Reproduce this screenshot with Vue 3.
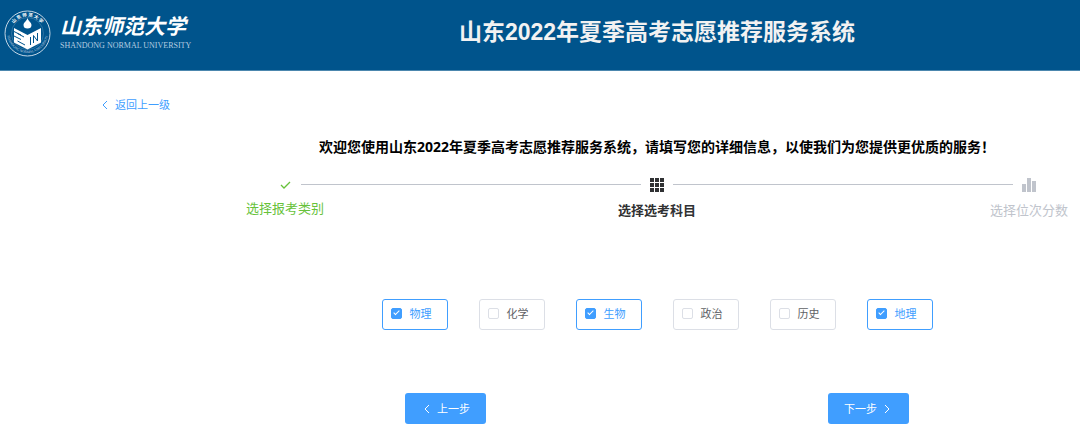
<template>
    <div class="page">
        <header class="header">
            <div class="brand">
                <svg class="brand__emblem" viewBox="0 0 94 94" aria-hidden="true">
                    <defs>
                        <path id="arc-top" d="M13 47 A34 34 0 0 1 81 47" />
                        <path id="arc-bottom" d="M6 45 A41 41 0 0 0 88 45" />
                    </defs>
                    <circle cx="47" cy="47" r="45" fill="none" stroke="#c3d6e5" stroke-width="2" />
                    <circle cx="47" cy="47" r="32" fill="none" stroke="#5b91b6" stroke-width="1" />
                    <text class="brand__ring brand__ring--cn" text-anchor="middle">
                        <textPath href="#arc-top" startOffset="50%">山 东 师 范 大 学</textPath>
                    </text>
                    <text class="brand__ring" text-anchor="middle">
                        <textPath href="#arc-bottom" startOffset="50%">SHANDONG NORMAL UNIVERSITY</textPath>
                    </text>
                    <path d="M47 16 C49 23 55 25 55 30 A8 7 0 0 1 39 30 C39 25 45 23 47 16Z" fill="#fff" />
                    <path d="M20 36 L47 50 L74 36 V65 L47 79 L20 65Z" fill="#fff" />
                    <path d="M20 43 L34 50 M27 47 L40 54 M20 52 L34 59 M27 62 L42 70" fill="none" stroke="#00548c"
                        stroke-width="2" />
                    <path d="M53 54 V70 M59 51 V66 M59 51 L67 62 M67 46 V62" fill="none" stroke="#00548c"
                        stroke-width="2" />
                </svg>
                <div class="brand__text">
                    <span class="brand__cn">山东师范大学</span>
                    <span class="brand__en">SHANDONG NORMAL UNIVERSITY</span>
                </div>
            </div>
            <h1 class="header__title">山东2022年夏季高考志愿推荐服务系统</h1>
        </header>

        <div class="body">
            <aside class="side">
                <a href="#" class="back" @click.prevent="prev">
                    <svg class="chevron" viewBox="0 0 12 12" aria-hidden="true">
                        <path d="M8 2 L4 6 L8 10" />
                    </svg>
                    <span>返回上一级</span>
                </a>
            </aside>

            <main class="main">
                <h2 class="welcome">欢迎您使用山东2022年夏季高考志愿推荐服务系统，请填写您的详细信息，以使我们为您提供更优质的服务！</h2>

                <div class="steps">
                    <template v-for="(step, index) in steps" :key="step.title">
                        <span v-if="index > 0" class="steps__line"></span>
                        <div class="step" :class="`step--${step.status}`">
                            <span class="step__icon">
                                <svg v-if="step.icon === 'check'" width="12" height="12" viewBox="0 0 12 12">
                                    <path d="M2 6 L5 9 L11 3" fill="none" stroke="currentColor" stroke-width="1.3" />
                                </svg>
                                <svg v-else-if="step.icon === 'grid'" width="16" height="16" viewBox="0 0 16 16">
                                    <path fill="currentColor"
                                        d="M1 1h4v4H1z M6 1h4v4H6z M11 1h4v4h-4z M1 6h4v4H1z M6 6h4v4H6z M11 6h4v4h-4z M1 11h4v4H1z M6 11h4v4H6z M11 11h4v4h-4z" />
                                </svg>
                                <svg v-else width="16" height="16" viewBox="0 0 16 16">
                                    <path fill="currentColor" d="M1 7h4v8H1z M6 1h4v14H6z M11 4h4v11h-4z" />
                                </svg>
                            </span>
                            <span class="step__title">{{ step.title }}</span>
                        </div>
                    </template>
                </div>

                <div class="subjects">
                    <label v-for="subject in subjects" :key="subject" class="subject"
                        :class="{ 'subject--checked': selected.includes(subject) }">
                        <input v-model="selected" type="checkbox" class="subject__box" :value="subject">
                        <span>{{ subject }}</span>
                    </label>
                </div>

                <div class="actions">
                    <button type="button" class="btn" @click="prev">
                        <svg class="chevron" viewBox="0 0 12 12" aria-hidden="true">
                            <path d="M8 2 L4 6 L8 10" />
                        </svg>
                        <span>上一步</span>
                    </button>
                    <button type="button" class="btn" @click="next">
                        <span>下一步</span>
                        <svg class="chevron" viewBox="0 0 12 12" aria-hidden="true">
                            <path d="M4 2 L8 6 L4 10" />
                        </svg>
                    </button>
                </div>
            </main>
        </div>
    </div>
</template>

<script setup>
import { ref } from 'vue'

const emit = defineEmits(['prev', 'next'])

const steps = [
    { title: '选择报考类别', icon: 'check', status: 'success' },
    { title: '选择选考科目', icon: 'grid', status: 'process' },
    { title: '选择位次分数', icon: 'chart', status: 'wait' }
]

const subjects = ['物理', '化学', '生物', '政治', '历史', '地理']
const selected = ref(['物理', '生物', '地理'])

const prev = () => emit('prev')
const next = () => emit('next', selected.value)
</script>

<style>
body {
    margin: 0;
    background: #fff;
}
</style>

<style scoped>
.page {
    font-family: "Noto Sans", "Noto Sans CJK SC", sans-serif;
    font-size: 11px;
    line-height: 16px;
    color: #606266;
}

.header,
.body {
    display: grid;
    grid-template-columns: 234px 1fr;
}

.header {
    height: 70px;
    background: #00548c;
    border-bottom: 1px solid #4c87ae;
}

.header__title {
    margin: 0;
    padding-top: 16px;
    font-family: "Liberation Sans", "Noto Sans CJK SC", sans-serif;
    font-size: 23px;
    line-height: 32px;
    text-align: center;
    color: #f2f2f2;
}

.brand {
    display: flex;
    align-items: flex-start;
    gap: 9px;
    padding: 10px 0 0 4px;
}

.brand__emblem {
    flex: none;
    width: 47px;
    height: 47px;
}

.brand__ring {
    font-family: "Liberation Serif", serif;
    font-size: 7px;
    fill: #c3d6e5;
}

.brand__ring--cn {
    font-family: "Noto Sans CJK SC", sans-serif;
    font-size: 9px;
    font-weight: bold;
    fill: #fff;
}

.brand__text {
    display: flex;
    flex-direction: column;
    padding-top: 3px;
    white-space: nowrap;
}

.brand__cn {
    font-family: "Noto Sans CJK SC", sans-serif;
    font-size: 21px;
    font-style: italic;
    font-weight: bold;
    line-height: 24px;
    color: #fff;
}

.brand__en {
    padding-top: 4px;
    font-family: "Liberation Serif", serif;
    font-size: 8px;
    line-height: 10px;
    color: #b5cde0;
}

.side {
    padding: 26px 0 0 99px;
}

.back {
    display: inline-flex;
    align-items: center;
    gap: 4px;
    color: #409eff;
    text-decoration: none;
}

.chevron {
    width: 12px;
    height: 12px;
    fill: none;
    stroke: currentColor;
    stroke-width: 1;
}

.welcome {
    margin: 0;
    padding-top: 66px;
    font-size: 14px;
    line-height: 20px;
    text-align: center;
    white-space: nowrap;
    color: #000;
}

.steps {
    display: grid;
    grid-template-columns: 78px 1fr 78px 1fr 78px;
    padding: 16px 12px 0;
}

.steps__line {
    height: 1px;
    margin: 11px -23px 0;
    background: #c0c4cc;
}

.step {
    display: flex;
    flex-direction: column;
    align-items: center;
    font-size: 13px;
    line-height: 20px;
    white-space: nowrap;
}

.step__icon {
    display: flex;
    align-items: center;
    height: 24px;
}

.step__title {
    padding-top: 3px;
}

.step--success {
    color: #67c23a;
}

.step--success .step__title {
    padding-top: 1px;
}

.step--process {
    font-weight: bold;
    color: #303133;
}

.step--wait {
    color: #c0c4cc;
}

.subjects {
    display: flex;
    justify-content: center;
    gap: 31px;
    padding-top: 79px;
}

.subject {
    display: flex;
    align-items: center;
    gap: 8px;
    box-sizing: border-box;
    width: 66px;
    height: 31px;
    padding: 0 0 2px 8px;
    border: 1px solid #dcdfe6;
    border-radius: 3px;
    cursor: pointer;
}

.subject--checked {
    border-color: #409eff;
    color: #409eff;
}

.subject__box {
    position: relative;
    appearance: none;
    box-sizing: border-box;
    width: 11px;
    height: 11px;
    margin: 0;
    border: 1px solid #dcdfe6;
    border-radius: 2px;
    background: #fff;
}

.subject__box:checked {
    border-color: #409eff;
    background: #409eff;
}

.subject__box:checked::after {
    content: "";
    position: absolute;
    top: 0;
    left: 3px;
    width: 2px;
    height: 5px;
    border: solid #fff;
    border-width: 0 1px 1px 0;
    transform: rotate(45deg);
}

.actions {
    display: grid;
    grid-template-columns: 1fr 1fr;
    justify-items: center;
    padding: 63px 0 20px;
}

.btn {
    display: flex;
    align-items: center;
    justify-content: center;
    gap: 4px;
    width: 81px;
    height: 31px;
    padding: 0;
    border: 0;
    border-radius: 3px;
    font-family: inherit;
    font-size: 11px;
    line-height: 16px;
    color: #fff;
    background: #409eff;
    cursor: pointer;
}
</style>
